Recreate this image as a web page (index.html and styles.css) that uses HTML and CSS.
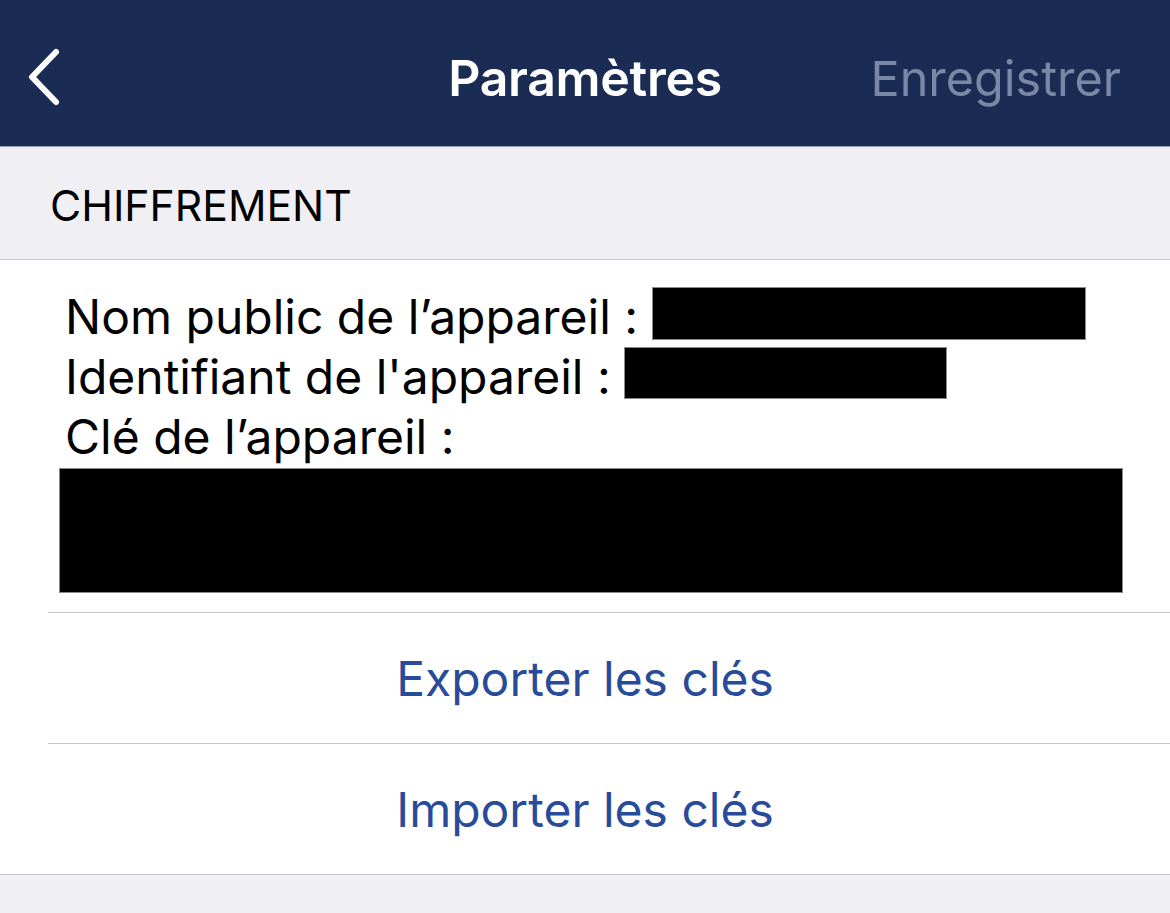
FILE: index.html
```html
<!DOCTYPE html>
<html lang="fr">
<head>
<meta charset="utf-8">
<title>Paramètres</title>
<link rel="stylesheet" href="styles.css">
</head>
<body>
<header class="navbar">
  <div class="nav-left">
    <svg class="back" width="40" height="60" viewBox="0 0 40 60"><path d="M32 4 L8 29 L32 54" fill="none" stroke="#fff" stroke-width="6" stroke-linecap="round" stroke-linejoin="round"/></svg>
  </div>
  <div class="nav-title">Paramètres</div>
  <div class="nav-right">Enregistrer</div>
</header>
<div class="section-header">CHIFFREMENT</div>
<div class="group">
  <div class="info">
    <div class="line">Nom public de l’appareil : <span class="redact r1"></span></div>
    <div class="line">Identifiant de l'appareil : <span class="redact r2"></span></div>
    <div class="line">Clé de l’appareil :</div>
    <div class="redact r3"></div>
  </div>
  <div class="row"><span class="action">Exporter les clés</span></div>
  <div class="row"><span class="action">Importer les clés</span></div>
</div>
</body>
</html>
```
FILE: styles.css
```css
html, body {
  margin: 0;
  padding: 0;
  background: #efeff4;
  font-family: Inter, "Liberation Sans", sans-serif;
}
.navbar {
  height: 147px;
  background: #1b2c54;
  border-bottom: 1px solid #9aa0ad;
  display: grid;
  grid-template-columns: 1fr auto 1fr;
  align-items: center;
  padding-top: 10px;
  box-sizing: border-box;
}
.nav-left {
  padding-left: 24px;
  display: flex;
  align-items: center;
}
.back { display: block; }
.nav-title {
  color: #fff;
  font-weight: 600;
  font-size: 50px;
  letter-spacing: -0.3px;
}
.nav-right {
  justify-self: end;
  padding-right: 49px;
  color: #7a88a7;
  font-size: 48.5px;
}
.section-header {
  height: 113px;
  box-sizing: border-box;
  padding: 4px 0 0 50px;
  display: flex;
  align-items: center;
  font-size: 42.7px;
  color: #000;
  border-bottom: 1px solid #c8c7cc;
}
.group {
  background: #fff;
  border-bottom: 1px solid #c8c7cc;
}
.info {
  padding: 27px 48px 19px 65px;
}
.line {
  font-size: 48px;
  line-height: 60px;
  height: 60px;
  color: #000;
  white-space: nowrap;
}
.redact {
  display: inline-block;
  background: #000;
  border: 1px solid #8a8a8a;
  box-sizing: border-box;
  vertical-align: top;
}
.r1 { width: 434px; height: 53px; }
.r2 { width: 323px; height: 52px; }
.r3 {
  display: block;
  width: 1064px;
  height: 125px;
  margin: 1px 0 0 -6px;
}
.row {
  margin-left: 48px;
  border-top: 1px solid #c8c7cc;
  height: 130px;
  display: flex;
  align-items: center;
  justify-content: center;
}
.action {
  color: #284c99;
  font-size: 48px;
  margin-left: -48px;
}
```
